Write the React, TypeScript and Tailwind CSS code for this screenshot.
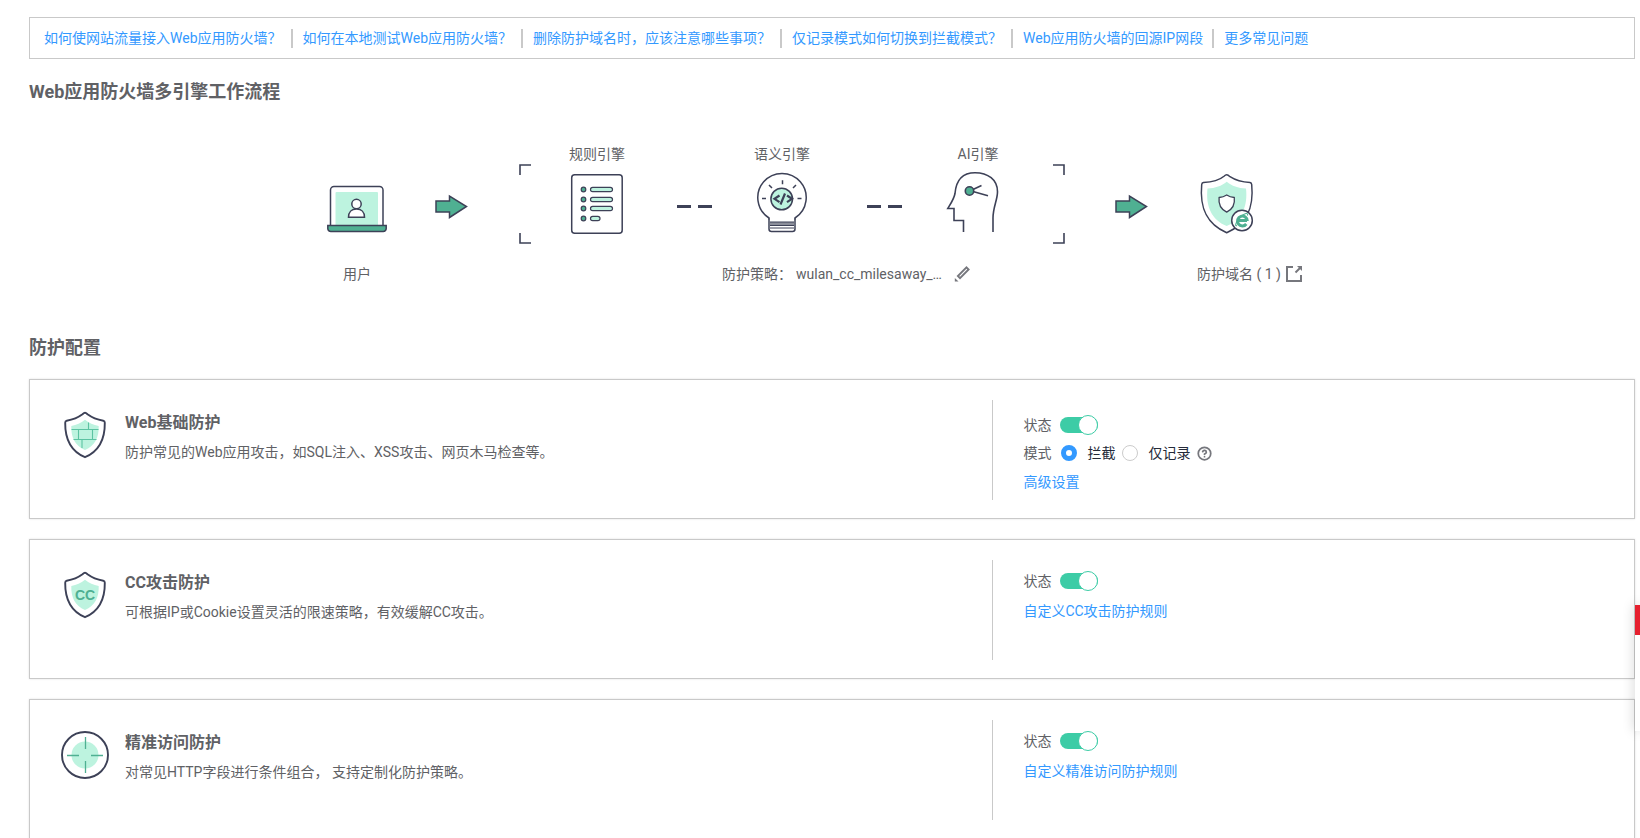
import React, { useState } from 'react';
import { CircleQuestionMark } from 'lucide-react';

const INK = '#3d4157';
const GREEN = '#4fb092';
const MINT = '#bdf3df';

const faqLinks = [
    '如何使网站流量接入Web应用防火墙？',
    '如何在本地测试Web应用防火墙？',
    '删除防护域名时，应该注意哪些事项？',
    '仅记录模式如何切换到拦截模式？',
    'Web应用防火墙的回源IP网段',
    '更多常见问题',
];

/* ---------- Flow drawings ---------- */

function LaptopIcon() {
    return (
        <svg width="60" height="60" viewBox="0 0 60 60" fill="none" stroke={INK} strokeWidth="1.5">
            <path d="M3.5 51V16a3.5 3.5 0 0 1 3.5-3.5h45.5A3.5 3.5 0 0 1 56 16v35" />
            <rect x="8.5" y="18" width="42.5" height="34" rx="1" fill={MINT} stroke="none" />
            <circle cx="29.5" cy="30" r="4.7" fill="#fff" />
            <path d="M21.5 43.3c0-5 3-8.2 8-8.2s8 3.2 8 8.2z" fill="#fff" />
            <path d="M.8 51.5h58.4v3a3 3 0 0 1-3 3H3.8a3 3 0 0 1-3-3z" fill={GREEN} />
        </svg>
    );
}

function ArrowIcon({ className }: { className: string }) {
    return (
        <svg className={className} width="33" height="60" viewBox="0 0 33 60">
            <path d="M1 27h13.500v-5L31.500 32.500 14.500 43.500v-5.500H1z" fill={GREEN} stroke={INK} strokeWidth="1.5" />
        </svg>
    );
}

function DashIcon({ className }: { className: string }) {
    return (
        <svg className={className} width="35" height="60" viewBox="0 0 35 60" fill={INK}>
            <rect x="0" y="31" width="14" height="3" />
            <rect x="21" y="31" width="14" height="3" />
        </svg>
    );
}

function RulesIcon() {
    return (
        <svg width="56" height="60" viewBox="0 0 56 60" fill="none" stroke={INK} strokeWidth="1.5">
            <rect x="2.7" y=".8" width="50.5" height="58.4" rx="3" />
            {[15.5, 25.5, 34.5, 44.5].map((y, i) => (
                <g key={y} strokeWidth="1.2">
                    <circle cx="14.5" cy={y} r="2.3" fill={GREEN} />
                    <rect x="21.5" y={y - 2.2} width={i === 3 ? 9.5 : 22} height="4.4" rx="2.2" fill={MINT} />
                </g>
            ))}
        </svg>
    );
}

function BulbIcon() {
    return (
        <svg className="overflow-visible" width="56" height="60" viewBox="0 0 56 60" fill="none" stroke={INK} strokeWidth="1.5">
            <path d="M15 45.500V44a24.200 24.200 0 1 1 26 0v1.500" />
            <path d="M15 44.500v10.500a2.500 2.500 0 0 0 2.500 2.500h21a2.500 2.500 0 0 0 2.500-2.500V44.500" />
            <rect x="16" y="48" width="24" height="3.5" fill="#8b8e9a" stroke="none" />
            <path d="M16 48h24M16 51.500h24M16 54h24" strokeWidth="1" />
            <circle cx="27.7" cy="25" r="10.8" fill={MINT} />
            <path d="m25.500 21.500-5 3.300 5 3.300M33 21.500l5 3.300-5 3.300M31 19.500l-4.500 11" strokeWidth="2.2" />
            <path d="M28.500 6.300v4M15 11l3 3M42 11l-3 3M8 24.500h4M43.500 24.500h4" />
        </svg>
    );
}

function HeadIcon() {
    return (
        <svg className="overflow-visible" width="56" height="60" viewBox="3 0 56 60" fill="none" stroke={INK} strokeWidth="1.6">
            <path d="M16.500 58V46.500H7V34.500H.8C3.500 30 7 25 8 19.500 9 7 15-1.300 28-1.300c13 0 22.500 7 22.500 19C50.500 26 46 33 46 44v14" />
            <path d="m26 15.500 8.500-4M26 17.500l15 4.300" />
            <circle cx="22.5" cy="17" r="4.2" fill={GREEN} />
        </svg>
    );
}

function DomainIcon() {
    return (
        <svg width="60" height="60" viewBox="0 0 60 60" fill="none" stroke={INK} strokeWidth="1.5">
            <path d="M29.700.8Q31 .8 33 2.700 41 8 53 8.500q1.500.2 1.700 2C57 34 50 50 29.700 58.700 9.500 50 2.500 34 4.700 10.500q.2-1.800 1.700-2C18.500 8 25 4 27 2.300Q28.500.8 29.700.8Z" />
            <path d="M29.700 7.700C35 12 41 14 49 14.500 51 32 45 46 29.700 52 14.500 46 8.500 32 10.500 14.500 18.500 14 24.500 12 29.700 7.700Z" fill={MINT} stroke="none" />
            <path d="M29.700 21c2.300 1.500 4.800 2.300 7.600 2.500.8 6.500-1.300 11.500-7.600 14.600-6.300-3.100-8.400-8.100-7.600-14.600 2.800-.2 5.300-1 7.600-2.500Z" fill="#fff" strokeWidth="1.3" />
            <circle cx="45" cy="46.5" r="10.3" fill="#fff" />
            <path d="M50 46.500H41.500M50.300 47A4.900 4.900 0 1 0 49.300 50" stroke={GREEN} strokeWidth="3" />
            <path d="M40 51.500c-3 1.500-.5-5 4-9 3.500-3 7.500-4.500 6.500-1" stroke={GREEN} strokeWidth="1.1" />
        </svg>
    );
}

function BracketIcon({ right }: { right?: boolean }) {
    return (
        <svg width="12" height="80" viewBox="0 0 12 80" fill="none" stroke={INK} strokeWidth="1.6">
            <path d={right ? 'M0 1h11v10M0 79h11V69' : 'M12 1H1v10M12 79H1V69'} />
        </svg>
    );
}

/* ---------- Card drawings ---------- */

function ShieldIcon({ children }: { children: React.ReactNode }) {
    return (
        <svg width="48" height="48" viewBox="0 0 48 48" fill="none">
            <path d="M24 1.800q1 0 2.500 1.400Q33 8 42.300 9.700q1.500.3 1.500 2C44 28 38.500 40 24 46.200 9.500 40 4 28 4.200 11.700q0-1.700 1.500-2Q15 8 21.500 3.200 23 1.800 24 1.800Z" stroke={INK} strokeWidth="1.9" />
            <path d="M24 8.700c4 3.300 8.500 5.300 13.700 6.300C38 26.500 34 34.500 24 39 14 34.500 10 26.500 10.300 15 15.500 14 20 12 24 8.700Z" fill={MINT} />
            {children}
        </svg>
    );
}

function BasicIcon() {
    return (
        <ShieldIcon>
            <path d="M10.500 18.500h27M12.500 28.500h23M27.500 11.500v7M17.500 18.500v10M31.500 18.500v10M21 28.500V37" stroke="#5cc3a2" strokeWidth="1.1" />
        </ShieldIcon>
    );
}

function CcIcon() {
    return (
        <ShieldIcon>
            <text x="24" y="29" textAnchor="middle" className="font-['Liberation_Sans',sans-serif] text-[14px] font-bold" fill={GREEN}>CC</text>
        </ShieldIcon>
    );
}

function TargetIcon() {
    return (
        <svg width="48" height="48" viewBox="0 0 48 48" fill="none">
            <circle cx="24" cy="24" r="23" stroke={INK} strokeWidth="1.9" />
            <circle cx="24" cy="24" r="13.5" fill={MINT} />
            <path d="M24.500 6v12M24.500 30v12M6 24.500h12M30 24.500h12" stroke={GREEN} strokeWidth="1.3" />
        </svg>
    );
}

/* ---------- Controls ---------- */

function StatusToggle({ id }: { id: string }) {
    const [enabled, setEnabled] = useState(true);

    return (
        <div className="flex items-center gap-[9px] leading-5">
            <label htmlFor={id}>状态</label>
            <input
                id={id}
                type="checkbox"
                role="switch"
                checked={enabled}
                onChange={(e) => setEnabled(e.target.checked)}
                className="relative w-[38px] h-4 appearance-none rounded-full bg-[#ccc] checked:bg-[#3dcca6] cursor-pointer before:absolute before:-top-0.5 before:left-0 before:size-5 before:rounded-full before:border before:border-[#ccc] before:bg-white checked:before:left-[18px] checked:before:border-[#3dcca6]"
            />
        </div>
    );
}

function ModeOptions() {
    const [mode, setMode] = useState('block');
    const radioClass = 'size-4 appearance-none rounded-full border border-[#ccc] bg-white checked:border-[5px] checked:border-[#3399ff] cursor-pointer';

    return (
        <div className="mt-2 flex items-center leading-5">
            <span className="mr-2.5">模式</span>
            <input id="mode-block" type="radio" name="mode" className={radioClass} checked={mode === 'block'} onChange={() => setMode('block')} />
            <label htmlFor="mode-block" className="ml-2.5 mr-[7px] text-[#252b3a]">拦截</label>
            <input id="mode-log" type="radio" name="mode" className={radioClass} checked={mode === 'log'} onChange={() => setMode('log')} />
            <label htmlFor="mode-log" className="ml-2.5 mr-[7px] text-[#252b3a]">仅记录</label>
            <CircleQuestionMark size={15} strokeWidth={2.8} className="text-[#76777d]" />
        </div>
    );
}

interface ConfigCardProps {
    icon: React.ReactNode;
    title: string;
    description: string;
    children: React.ReactNode;
}

function ConfigCard({ icon, title, description, children }: ConfigCardProps) {
    return (
        <article className="flex min-h-[140px] border border-[#c9c9c9] bg-white shadow-[0_0_2px_rgba(0,0,0,0.12)]">
            <div className="w-3/5 flex gap-4 pl-[31px] pt-[31px]">
                <div className="shrink-0">{icon}</div>
                <div>
                    <h3 className="text-base leading-6 font-bold">{title}</h3>
                    <p className="mt-[7px] leading-5">{description}</p>
                </div>
            </div>
            <div className="flex-1 mt-5 mb-[18px] pl-[30px] border-l border-[#c9c9c9]">{children}</div>
        </article>
    );
}

export default function App() {
    return (
        <main className="h-screen overflow-y-auto [scrollbar-width:none] bg-white pt-[17px] pl-[29px] pr-[5px] font-[Roboto,'Noto_Sans_CJK_SC',sans-serif] text-sm text-[#606165]">
            <nav className="flex flex-wrap items-center border border-[#c9c9c9] px-[14px] py-2.5">
                {faqLinks.map((text, i) => (
                    <React.Fragment key={text}>
                        {i > 0 && <span className="ml-[9px] mr-2.5 h-[19px] w-0.5 bg-[#c9c9c9]" />}
                        <a href="#" className="leading-5 text-[#3399ff]">{text}</a>
                    </React.Fragment>
                ))}
            </nav>

            <h2 className="mt-[21px] text-lg leading-6 font-bold">Web应用防火墙多引擎工作流程</h2>

            {/* Engine flow */}
            <section className="mt-10 flex items-end justify-center pr-20">
                <div className="flex flex-col items-center">
                    <LaptopIcon />
                    <span className="mt-[30px] leading-5">用户</span>
                </div>
                <ArrowIcon className="mb-[50px] ml-12 mr-[51px]" />
                <div className="flex flex-col">
                    <div className="flex items-end">
                        <BracketIcon />
                        <div className="mb-2.5 ml-[38px] mr-[47px] flex items-end">
                            <div className="flex flex-col items-center gap-2.5">
                                <span className="leading-5">规则引擎</span>
                                <RulesIcon />
                            </div>
                            <DashIcon className="ml-[52px] mr-[42px]" />
                            <div className="flex flex-col items-center gap-2.5">
                                <span className="leading-5">语义引擎</span>
                                <BulbIcon />
                            </div>
                            <DashIcon className="ml-[57px] mr-12" />
                            <div className="flex flex-col items-center gap-2.5">
                                <span className="leading-5">AI引擎</span>
                                <HeadIcon />
                            </div>
                        </div>
                        <BracketIcon right />
                    </div>
                    <div className="mt-5 ml-[203px] flex items-center leading-5">
                        <span>防护策略：</span>
                        <span className="ml-1">wulan_cc_milesaway_…</span>
                        <button type="button" aria-label="编辑" className="ml-3 cursor-pointer">
                            <svg width="16" height="16" viewBox="0 0 16 16" fill="none" stroke="#76777d" strokeWidth="1.9">
                                <path d="m12.500 1.400 2.100 2.100-8.600 8.600-2.100-2.100z" />
                                <path d="M.8 15.500v-3.500l3.700 3.500z" fill="#76777d" stroke="none" />
                            </svg>
                        </button>
                    </div>
                </div>
                <ArrowIcon className="mb-[50px] ml-[50px] mr-[49px]" />
                <div className="w-[60px]">
                    <DomainIcon />
                    <div className="mt-[30px] flex items-center whitespace-nowrap leading-5">
                        <span>防护域名 ( 1 )</span>
                        <a href="#" aria-label="查看防护域名" className="ml-[5px]">
                            <svg width="16" height="16" viewBox="0 0 16 16" fill="none" stroke="#76777d" strokeWidth="2">
                                <path d="M7 1H1v14h14V9" />
                                <path d="m9.500 6.500 5-5" />
                                <path d="M11 0h5v5z" fill="#76777d" stroke="none" />
                            </svg>
                        </a>
                    </div>
                </div>
            </section>

            <h2 className="mt-[52px] text-lg leading-6 font-bold">防护配置</h2>

            <div className="mt-[19px] flex flex-col gap-5">
                <ConfigCard icon={<BasicIcon />} title="Web基础防护" description="防护常见的Web应用攻击，如SQL注入、XSS攻击、网页木马检查等。">
                    <div className="pt-[15px]">
                        <StatusToggle id="status-basic" />
                        <ModeOptions />
                        <a href="#" className="mt-[9px] block w-fit leading-5 text-[#3399ff]">高级设置</a>
                    </div>
                </ConfigCard>
                <ConfigCard icon={<CcIcon />} title="CC攻击防护" description="可根据IP或Cookie设置灵活的限速策略，有效缓解CC攻击。">
                    <div className="pt-[11px]">
                        <StatusToggle id="status-cc" />
                        <a href="#" className="mt-2.5 block w-fit leading-5 text-[#3399ff]">自定义CC攻击防护规则</a>
                    </div>
                </ConfigCard>
                <ConfigCard icon={<TargetIcon />} title="精准访问防护" description="对常见HTTP字段进行条件组合， 支持定制化防护策略。">
                    <div className="pt-[11px]">
                        <StatusToggle id="status-precise" />
                        <a href="#" className="mt-2.5 block w-fit leading-5 text-[#3399ff]">自定义精准访问防护规则</a>
                    </div>
                </ConfigCard>
            </div>

            {/* Side dock peeking in from the right edge */}
            <aside className="fixed right-0 top-[605px] w-[5px] bg-white shadow-[0_0_12px_rgba(0,0,0,0.25)]">
                <div className="h-[30px] bg-[#e6202f]" />
                <div className="h-24" />
            </aside>
        </main>
    );
}
